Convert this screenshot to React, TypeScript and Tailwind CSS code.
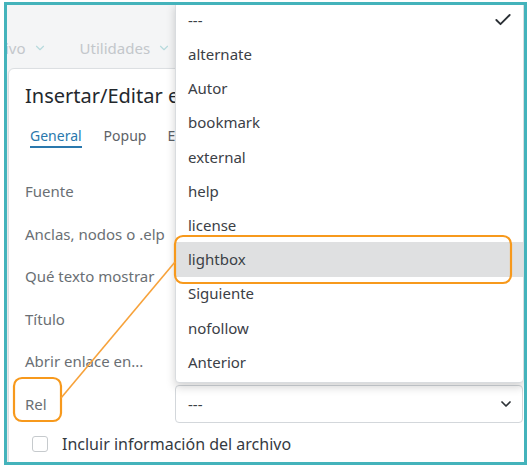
import { Check, ChevronDown } from 'lucide-react'

const fields = ['Fuente', 'Anclas, nodos o .elp', 'Qué texto mostrar', 'Título', 'Abrir enlace en...']

const relOptions = [
  '---',
  'alternate',
  'Autor',
  'bookmark',
  'external',
  'help',
  'license',
  'lightbox',
  'Siguiente',
  'nofollow',
  'Anterior',
]

export default function App() {
  return (
    <div
      className="relative w-[531px] h-[469px] bg-white overflow-hidden"
      style={{ fontFamily: '"Noto Sans", "Open Sans", sans-serif' }}
    >
      <div className="ml-[4px] mt-[2px] w-[523px] h-[463px] border-[3px] border-[#44b3bb]">
        <div className="relative w-full h-full overflow-hidden bg-[#f4f5f6]">
          {/* menu bar behind the dialog */}
          <div className="h-[63px] flex items-end pb-[10px] text-[15px] leading-[20px] text-[#c3c7cb]">
            <div className="flex items-center gap-[7px] -ml-[2px]">
              <span>ivo</span>
              <ChevronDown className="w-[14px] h-[14px] text-[#b7dadd]" strokeWidth={2} />
            </div>
            <div className="flex items-center gap-[7px] ml-[33px]">
              <span>Utilidades</span>
              <ChevronDown className="w-[14px] h-[14px] text-[#b7dadd]" strokeWidth={2} />
            </div>
          </div>

          {/* dialog */}
          <div className="ml-[1px] w-[620px] h-[420px] bg-white border border-[#dcdfe2] rounded-tl-[6px] shadow-md pl-[16px] pt-[13px]">
            <h2 className="w-[150px] overflow-hidden whitespace-nowrap text-[20px] leading-[28px] text-[#23282d]">
              Insertar/Editar enlace
            </h2>

            <div className="mt-[16px] flex items-start text-[14px] leading-[20px] pl-[5px]">
              <div className="text-[#2a78ad] border-b-2 border-[#2a78ad]">General</div>
              <div className="ml-[22px] text-[#5d6267]">Popup</div>
              <div className="ml-[21px] w-[8px] overflow-hidden text-[#5d6267]">E</div>
            </div>

            <div className="mt-[22px]">
              {fields.map((f) => (
                <div key={f} className="h-[42.5px] flex items-center">
                  <div className="w-[150px] text-[15px] text-[#6a6f74]">{f}</div>
                  <div className="w-[348px] h-[37px] border border-[#ced4da] rounded-[4px]" />
                </div>
              ))}
              <div className="h-[42.5px] flex items-center">
                <div className="w-[150px] text-[15px] text-[#6a6f74]">Rel</div>
                <div className="w-[348px] h-[38px] border border-[#d3d7db] rounded-[4px] flex items-center justify-between pl-[12px] pr-[8px] text-[15px] text-[#3b4046]">
                  <span>---</span>
                  <ChevronDown className="w-[16px] h-[16px] text-[#2c3136]" strokeWidth={2.6} />
                </div>
              </div>
            </div>

            <label className="mt-[7px] ml-[7px] flex items-center gap-[14px] text-[16px] text-[#353a3f]">
              <span className="w-[16px] h-[16px] border border-[#c6cacd] rounded-[3px] bg-white" />
              Incluir información del archivo
            </label>
          </div>

          {/* open select list */}
          <div className="absolute left-[168px] right-0 top-[-3px] h-[381px] bg-white border border-[#d9dcdf] rounded-b-[4px] shadow-[0_4px_10px_rgba(0,0,0,0.18)]">
            {relOptions.map((o, i) => (
              <div
                key={o}
                className={`h-[34.2px] flex items-center justify-between pl-[12px] pr-[10px] text-[15px] text-[#3b4046] ${
                  o === 'lightbox' ? 'bg-[#dfe0e1]' : ''
                }`}
              >
                <span>{o}</span>
                {i === 0 && <Check className="w-[20px] h-[20px] text-[#2a2f34]" strokeWidth={2.2} />}
              </div>
            ))}
          </div>
        </div>
      </div>

      {/* orange annotation */}
      <svg className="absolute left-0 top-0 pointer-events-none" width="531" height="469">
        <rect x="14" y="378" width="47" height="43" rx="8" fill="none" stroke="#f7991c" strokeWidth="2.2" />
        <rect x="175" y="236" width="336" height="47" rx="8" fill="none" stroke="#f7991c" strokeWidth="2.2" />
        <line x1="61" y1="398" x2="175" y2="262" stroke="#f7a23a" strokeWidth="1.6" />
      </svg>
    </div>
  )
}
